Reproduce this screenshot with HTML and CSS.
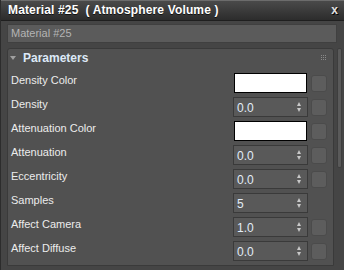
FILE: index.html
```html
<!DOCTYPE html>
<html>
<head>
<meta charset="utf-8">
<link rel="stylesheet" href="styles.css">
</head>
<body>
<div class="window">
  <div class="titlebar">
    <span class="title">Material #25  ( Atmosphere Volume )</span>
    <span class="close">x</span>
  </div>
  <div class="namefield">Material #25</div>
  <div class="content">
    <div class="panel">
      <div class="panel-head">
        <span class="tri"></span>
        <span class="panel-title">Parameters</span>
        <span class="grip">
          <i></i><i></i><i></i><i></i><i></i><i></i><i></i><i></i><i></i>
        </span>
      </div>
      <div class="rows">
        <div class="row"><span class="label">Density Color</span><span class="swatch"></span><span class="check"></span></div>
        <div class="row"><span class="label">Density</span><span class="spinner"><span class="val">0.0</span><span class="arrows"></span></span><span class="check"></span></div>
        <div class="row"><span class="label">Attenuation Color</span><span class="swatch"></span><span class="check"></span></div>
        <div class="row"><span class="label">Attenuation</span><span class="spinner"><span class="val">0.0</span><span class="arrows"></span></span><span class="check"></span></div>
        <div class="row"><span class="label">Eccentricity</span><span class="spinner"><span class="val">0.0</span><span class="arrows"></span></span><span class="check"></span></div>
        <div class="row"><span class="label">Samples</span><span class="spinner"><span class="val">5</span><span class="arrows"></span></span></div>
        <div class="row"><span class="label">Affect Camera</span><span class="spinner"><span class="val">1.0</span><span class="arrows"></span></span><span class="check"></span></div>
        <div class="row"><span class="label">Affect Diffuse</span><span class="spinner"><span class="val">0.0</span><span class="arrows"></span></span><span class="check"></span></div>
      </div>
    </div>
    <div class="scrollbar"><div class="thumb"></div></div>
  </div>
</div>
</body>
</html>
```

FILE: styles.css
```css
* { box-sizing: border-box; }
html, body {
  margin: 0;
  padding: 0;
  width: 344px;
  height: 270px;
  overflow: hidden;
  background: #454545;
  font-family: "Liberation Sans", Arial, sans-serif;
}
.window {
  width: 344px;
  height: 270px;
  border-left: 1px solid #2c2c2c;
  background: #454545;
}
.titlebar {
  height: 21px;
  border-top: 1px solid #6c6c6c;
  border-bottom: 1px solid #1f1f1f;
  background: linear-gradient(#4a4a4a, #2c2c2c);
  display: flex;
  align-items: center;
  padding: 0 7px 1px 7px;
  color: #ffffff;
  font-weight: bold;
  font-size: 12px;
}
.title {
  white-space: pre;
  flex: 1;
  letter-spacing: 0.15px;
  text-shadow: 0 1px 0 #111;
}
.close {
  font-size: 12px;
  font-weight: bold;
  color: #e0e0e0;
  text-shadow: 1px 1px 0 #000;
  margin-right: -1px;
}
.namefield {
  margin: 3px 7px 0 6px;
  height: 19px;
  background: #5b5b5b;
  border: 1px solid #404040;
  color: #b4b4b4;
  font-size: 11px;
  line-height: 17px;
  padding-left: 3px;
}
.content {
  display: flex;
  margin-top: 5px;
  padding-left: 6px;
  height: 218px;
}
.panel {
  width: 327px;
  height: 218px;
  background: #515151;
  border: 1px solid #3a3a3a;
  border-radius: 3px 3px 0 0;
}
.panel-head {
  height: 20px;
  display: flex;
  align-items: center;
}
.tri {
  width: 0;
  height: 0;
  border-left: 3px solid transparent;
  border-right: 3px solid transparent;
  border-top: 4px solid #a0a0a0;
  margin-left: 2px;
  margin-right: 7px;
  margin-top: -3px;
}
.panel-title {
  font-weight: bold;
  font-size: 12px;
  color: #dde9f7;
  flex: 1;
  margin-top: -2px;
}
.grip {
  display: grid;
  grid-template-columns: repeat(3, 1px);
  grid-template-rows: repeat(3, 1px);
  gap: 1px;
  margin-right: 7px;
  margin-top: -4px;
}
.grip i {
  display: block;
  width: 1px;
  height: 1px;
  background: #8a8a8a;
}
.rows {
  display: flex;
  flex-direction: column;
  gap: 4px;
  padding: 4px 6px 0 3px;
}
.row {
  display: grid;
  grid-template-columns: 1fr 75px 16px;
  column-gap: 3px;
  height: 20px;
  align-items: center;
}
.label {
  color: #ececec;
  font-size: 11px;
  align-self: start;
  line-height: 15px;
}
.swatch {
  display: block;
  height: 20px;
  margin: 0 1px;
  background: #ffffff;
  border: 1px solid #000;
}
.spinner {
  grid-column: 2;
  height: 20px;
  background: #595959;
  border: 1px solid #3a3a3a;
  display: flex;
  align-items: center;
  padding: 0 5px 0 3px;
}
.val {
  flex: 1;
  font-size: 12px;
  color: #e2ecf8;
  padding-top: 1px;
}
.arrows {
  width: 5px;
  height: 10px;
  position: relative;
}
.arrows::before, .arrows::after {
  content: "";
  position: absolute;
  left: 0;
  border-left: 2.5px solid transparent;
  border-right: 2.5px solid transparent;
}
.arrows::before {
  top: 0;
  border-bottom: 4px solid #c8c8c8;
}
.arrows::after {
  bottom: 0;
  border-top: 4px solid #c8c8c8;
}
.check {
  grid-column: 3;
  width: 16px;
  height: 17px;
  background: #5d5d5d;
  border: 1px solid #4b4b4b;
  border-radius: 3px;
}
.scrollbar {
  width: 5px;
  margin-left: 3px;
  height: 218px;
}
.thumb {
  width: 5px;
  height: 120px;
  background: #5a5a5a;
  border: 1px solid #3e3e3e;
  border-radius: 2px;
}
```
